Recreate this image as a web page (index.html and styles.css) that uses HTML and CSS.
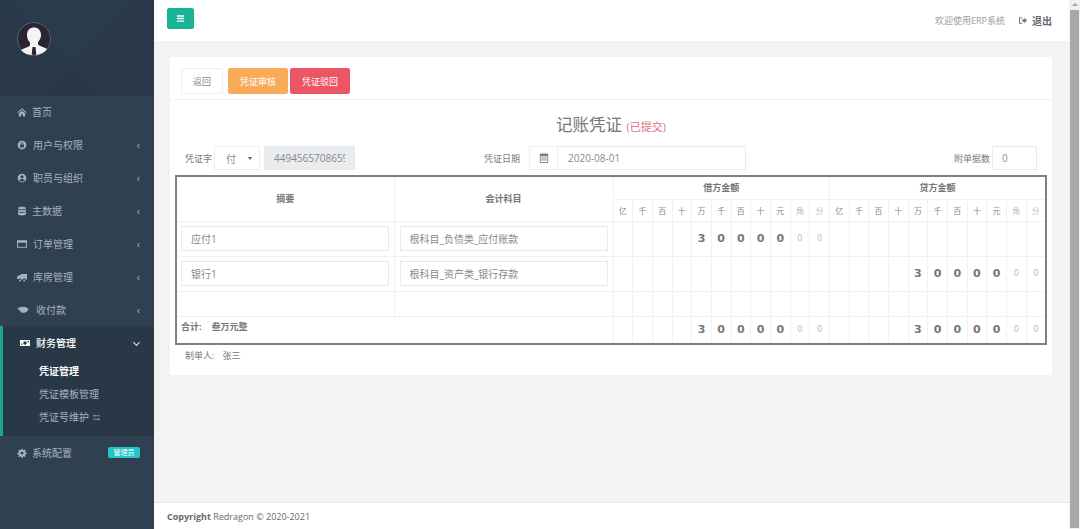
FILE: index.html
```html
<!DOCTYPE html>
<html lang="zh-CN">

<head>
    <meta charset="UTF-8">
    <title>记账凭证</title>
    <link rel="stylesheet" href="styles.css">
</head>

<body>
    <div class="app">
        <nav class="sidebar">
            <div class="profile">
                <svg class="avatar" viewBox="0 0 34 34">
                    <circle cx="17" cy="17" r="16.500" fill="#2a2435" stroke="#56606e" />
                    <path d="M10 13c0-5 3-7.500 7-7.500s7 2.500 7 7.500c0 3-1.500 5.500-3 7v2.500c2 2 6 2.500 9 4.500-3 4-8 6-13 6S7 32 4 28c3-2 7-2.500 9-4.500V20.500c-1.500-1.500-3-4-3-7.500z" fill="#f4f4f4" />
                    <path d="M15.500 25h3l.8 7-2.300 2-2.300-2z" fill="#2a2435" />
                </svg>
            </div>
            <ul class="menu">
                <li class="item">
                    <svg class="icon icon-narrow" viewBox="0 0 16 16"><path d="M8 2l7.500 6.500-1 1L8 4 1.500 9.500l-1-1zM3 10l5-4 5 4v5H9.500v-3.500h-3V15H3z" /></svg>首页
                </li>
                <li class="item">
                    <svg class="icon" viewBox="0 0 16 16"><path fill-rule="evenodd" d="M8 1a7 7 0 110 14A7 7 0 018 1zM5 7v5h6V7h-1V5.500a2 2 0 00-4 0V7zm2-1.500a1 1 0 012 0V7H7z" /></svg>用户与权限<span class="arrow">‹</span>
                </li>
                <li class="item">
                    <svg class="icon" viewBox="0 0 16 16"><path fill-rule="evenodd" d="M8 1a7 7 0 110 14A7 7 0 018 1zm0 2.500a2.500 2.500 0 100 5 2.500 2.500 0 000-5zM3.800 11.500a5 5 0 008.400 0C11 10 9.500 9.500 8 9.500s-3 .5-4.200 2z" /></svg>职员与组织<span class="arrow">‹</span>
                </li>
                <li class="item">
                    <svg class="icon icon-narrow" viewBox="0 0 16 16"><path d="M8 1c3.500 0 6.500 1 6.500 2.200S11.500 5.500 8 5.500 1.500 4.400 1.500 3.200 4.500 1 8 1zM1.500 5c1 1 4 1.700 6.500 1.700S13.500 6 14.500 5v2.500c0 1.200-3 2.200-6.500 2.200s-6.500-1-6.500-2.200zm0 4.300c1 1 4 1.700 6.500 1.700s5.500-.7 6.500-1.700v3.500C14.500 14 11.500 15 8 15s-6.500-1-6.500-2.200z" /></svg>主数据<span class="arrow">‹</span>
                </li>
                <li class="item">
                    <svg class="icon" viewBox="0 0 16 16"><path fill-rule="evenodd" d="M0 2h16v12H0zm1.500 4v6.500h13V6z" /></svg>订单管理<span class="arrow">‹</span>
                </li>
                <li class="item">
                    <svg class="icon" viewBox="0 0 16 16"><path d="M6 3h10v9h-2.500a2 2 0 00-4 0H6.500a2 2 0 00-3.500-1H0V7.500L2.500 5H6zM5 12a1.500 1.500 0 110 3 1.500 1.500 0 010-3zm6.500 0a1.500 1.500 0 110 3 1.500 1.500 0 010-3z" /></svg>库房管理<span class="arrow">‹</span>
                </li>
                <li class="item">
                    <svg class="icon icon-wide" viewBox="0 0 20 16" fill="none" stroke="currentColor" stroke-width="1.500"><path d="M1 6c4-3 13-4 17 0 1 3-3 6-7 6-3 0-5-1-6-3" /><circle cx="12" cy="8" r="2.200" /></svg>收付款<span class="arrow">‹</span>
                </li>
                <li class="active-group">
                    <div class="item active-title">
                        <svg class="icon" viewBox="0 0 20 16"><path fill-rule="evenodd" d="M0 2h20v12H0zm10 2.500a3.500 3.500 0 100 7 3.500 3.500 0 000-7zM2 4v7.500H5a3 3 0 00-3-3zm16 0h-3a3 3 0 003 3z" /></svg>财务管理<span class="arrow-down"></span>
                    </div>
                    <ul class="submenu">
                        <li class="sub-active">凭证管理</li>
                        <li>凭证模板管理</li>
                        <li>凭证号维护 <svg class="icon-small" viewBox="0 0 12 10" fill="none" stroke="currentColor"><path d="M1 2.500h10M3 1v3M1 7.500h10M9 6v3" /></svg></li>
                    </ul>
                </li>
                <li class="item">
                    <svg class="icon icon-narrow" viewBox="0 0 16 16"><path fill-rule="evenodd" d="M7 1h2l.4 2 1.400.6L12.500 2.500 14 4l-1.100 1.700.6 1.300 2 .4v2l-2 .4-.6 1.400 1.100 1.700-1.500 1.500-1.700-1.100-1.400.6-.4 2H7l-.4-2-1.400-.6-1.700 1.100L2 13.500l1.100-1.700-.6-1.400-2-.4v-2l2-.4.6-1.300L2 4l1.500-1.500 1.700 1.100 1.400-.6zM8 6a2.200 2.200 0 100 4.400A2.200 2.200 0 008 6z" /></svg>系统配置<span class="badge">管理员</span>
                </li>
            </ul>
        </nav>

        <div class="main">
            <header class="topbar">
                <button class="toggle"><svg viewBox="0 0 10 9" fill="#fff"><path d="M1 1h8v1.500H1zM1 3.800h8v1.500H1zM1 6.600h8v1.500H1z" /></svg></button>
                <span class="welcome">欢迎使用ERP系统</span>
                <span class="logout">
                    <svg class="logout-icon" viewBox="0 0 12 10"><path d="M5 0H1a1 1 0 00-1 1v8a1 1 0 001 1h4V8.500H1.500v-7H5zM5 3h3V0.500L12 5 8 9.500V7H5z" /></svg>退出
                </span>
            </header>

            <div class="content">
                <div class="card">
                    <div class="toolbar">
                        <button class="btn btn-default">返回</button>
                        <button class="btn btn-warning">凭证审核</button>
                        <button class="btn btn-danger">凭证驳回</button>
                    </div>
                    <h2 class="title">记账凭证 <small>(已提交)</small></h2>

                    <div class="form-row">
                        <label class="label-first">凭证字</label>
                        <div class="select">付<span class="caret"></span></div>
                        <input class="field field-readonly" value="449456570865930" readonly>
                        <label class="label-date">凭证日期</label>
                        <span class="addon">
                            <svg viewBox="0 0 12 12" fill="#777"><path fill-rule="evenodd" d="M2 1h2V0h1v1h2V0h1v1h2a1 1 0 011 1v9a1 1 0 01-1 1H2a1 1 0 01-1-1V2a1 1 0 011-1zm0 3v7h8V4zm1 1h1.500v1.500H3zm2.300 0h1.500v1.500H5.300zM7.600 5H9v1.500H7.600zM3 7.500h1.500V9H3zm2.300 0h1.500V9H5.300zm2.300 0H9V9H7.600z" /></svg>
                        </span>
                        <input class="field field-date" value="2020-08-01">
                        <label class="label-attach">附单据数</label>
                        <input class="field field-attach" value="0">
                    </div>

                    <table class="voucher">
                        <colgroup>
                            <col class="col-summary">
                            <col class="col-subject">
                        </colgroup>
                        <thead>
                            <tr class="head-one">
                                <th rowspan="2">摘要</th>
                                <th rowspan="2">会计科目</th>
                                <th colspan="11">借方金额</th>
                                <th colspan="11">贷方金额</th>
                            </tr>
                            <tr class="head-two">
                                <td>亿</td><td>千</td><td>百</td><td>十</td><td>万</td><td>千</td><td>百</td><td>十</td><td>元</td><td class="faint">角</td><td class="faint">分</td>
                                <td>亿</td><td>千</td><td>百</td><td>十</td><td>万</td><td>千</td><td>百</td><td>十</td><td>元</td><td class="faint">角</td><td class="faint">分</td>
                            </tr>
                        </thead>
                        <tbody>
                            <tr class="row-entry">
                                <td class="cell-input cell-summary"><input class="field" value="应付1"></td>
                                <td class="cell-input"><input class="field" value="根科目_负债类_应付账款"></td>
                                <td></td><td></td><td></td><td></td>
                                <td class="num">3</td><td class="num">0</td><td class="num">0</td><td class="num">0</td><td class="num">0</td><td class="cent">0</td><td class="cent">0</td>
                                <td></td><td></td><td></td><td></td><td></td><td></td><td></td><td></td><td></td><td></td><td></td>
                            </tr>
                            <tr class="row-entry">
                                <td class="cell-input cell-summary"><input class="field" value="银行1"></td>
                                <td class="cell-input"><input class="field" value="根科目_资产类_银行存款"></td>
                                <td></td><td></td><td></td><td></td><td></td><td></td><td></td><td></td><td></td><td></td><td></td>
                                <td></td><td></td><td></td><td></td>
                                <td class="num">3</td><td class="num">0</td><td class="num">0</td><td class="num">0</td><td class="num">0</td><td class="cent">0</td><td class="cent">0</td>
                            </tr>
                            <tr class="row-empty">
                                <td></td><td></td>
                                <td></td><td></td><td></td><td></td><td></td><td></td><td></td><td></td><td></td><td></td><td></td>
                                <td></td><td></td><td></td><td></td><td></td><td></td><td></td><td></td><td></td><td></td><td></td>
                            </tr>
                            <tr class="row-total">
                                <td colspan="2" class="total-text">合计:<span class="total-amount">叁万元整</span></td>
                                <td></td><td></td><td></td><td></td>
                                <td class="num">3</td><td class="num">0</td><td class="num">0</td><td class="num">0</td><td class="num">0</td><td class="cent">0</td><td class="cent">0</td>
                                <td></td><td></td><td></td><td></td>
                                <td class="num">3</td><td class="num">0</td><td class="num">0</td><td class="num">0</td><td class="num">0</td><td class="cent">0</td><td class="cent">0</td>
                            </tr>
                        </tbody>
                    </table>
                    <p class="maker">制单人:<span class="maker-name">张三</span></p>
                </div>
            </div>

            <footer class="footer"><strong>Copyright</strong> Redragon © 2020-2021</footer>
        </div>

        <div class="scrollbar">
            <span class="scroll-up"></span>
            <div class="scroll-thumb"></div>
        </div>
    </div>
</body>

</html>
```

FILE: styles.css
```css
* {
    box-sizing: border-box;
}

body {
    margin: 0;
    font-family: "Open Sans", "Noto Sans CJK SC", sans-serif;
    font-size: 9px;
    color: #777;
    background-color: #f3f3f4;
    overflow: hidden;
}

ul {
    list-style: none;
    margin: 0;
    padding: 0;
}

.app {
    display: flex;
    height: 529px;
}

/* 左侧菜单 */
.sidebar {
    width: 154px;
    flex-shrink: 0;
    background-color: #2f4050;
    color: #a7b1c2;
    font-size: 10px;
}

.profile {
    height: 96px;
    padding: 22px 0 0 17px;
    background-color: #2a3b4b;
    background-image:
        linear-gradient(135deg, transparent 55%, rgba(0, 0, 0, 0.03) 55%),
        linear-gradient(45deg, rgba(0, 0, 0, 0.03) 40%, transparent 40%);
}

.avatar {
    display: block;
    width: 34px;
    height: 34px;
}

.item {
    display: flex;
    align-items: center;
    height: 33px;
    padding: 0 14px 2px 17px;
}

.icon {
    width: 10px;
    height: 10px;
    margin-right: 6px;
    fill: currentColor;
    flex-shrink: 0;
}

.icon-narrow {
    margin-right: 5px;
}

.icon-wide {
    width: 12px;
    margin-right: 7px;
}

.arrow {
    margin-left: auto;
    font-size: 11px;
    line-height: 1;
}

.arrow-down {
    margin-left: auto;
    margin-right: 1px;
    width: 5px;
    height: 5px;
    border-right: 1px solid #dfe4ed;
    border-bottom: 1px solid #dfe4ed;
    transform: rotate(45deg);
}

.active-group {
    height: 110px;
    margin: -1px 0 1px;
    background-color: #293846;
    border-left: 3px solid #19aa8d;
}

.active-title {
    height: 35px;
    color: #fff;
    font-weight: 500;
}

.submenu li {
    height: 23px;
    line-height: 21px;
    padding-left: 36px;
}

.submenu .sub-active {
    color: #fff;
    font-weight: 700;
}

.icon-small {
    width: 9px;
    height: 7px;
}

.badge {
    margin-left: auto;
    width: 32px;
    height: 11px;
    line-height: 11px;
    text-align: center;
    font-size: 7px;
    color: #fff;
    background-color: #23c6c8;
    border-radius: 2px;
}

/* 右侧内容 */
.main {
    flex: 1;
    display: flex;
    flex-direction: column;
    min-width: 0;
}

.topbar {
    display: flex;
    align-items: center;
    height: 41px;
    padding: 0 17px 0 13px;
    background-color: #fff;
}

.toggle {
    width: 27px;
    height: 21px;
    padding: 0;
    margin: -5px 0 0;
    border: 1px solid #1ab394;
    border-radius: 2px;
    background-color: #1ab394;
}

.toggle svg {
    display: block;
    width: 9px;
    height: 9px;
    margin: auto;
}

.welcome {
    margin-left: auto;
    color: #999c9e;
    font-size: 9px;
}

.logout {
    display: flex;
    align-items: center;
    margin-left: 14px;
    font-size: 10px;
    font-weight: 700;
    color: #676a6c;
}

.logout-icon {
    width: 8px;
    height: 7px;
    margin-right: 5px;
    fill: #777;
}

.content {
    flex: 1;
    padding: 16px 17px 0 16px;
}

.card {
    height: 318px;
    background-color: #fff;
}

.toolbar {
    display: flex;
    height: 43px;
    padding: 11px 0 0 11px;
    border-bottom: 1px solid #f0f1f2;
}

.btn {
    height: 26px;
    margin-right: 2px;
    padding: 0;
    border: 1px solid;
    border-radius: 2px;
    font-family: inherit;
    font-size: 9px;
    color: #fff;
}

.btn-default {
    width: 42px;
    margin-right: 5px;
    color: #888;
    background-color: #fff;
    border-color: #eceef0;
}

.btn-warning {
    width: 60px;
    background-color: #f8ac59;
    border-color: #f8ac59;
}

.btn-danger {
    width: 60px;
    background-color: #ed5565;
    border-color: #ed5565;
}

.title {
    height: 46px;
    margin: 0;
    padding-top: 12px;
    text-align: center;
    font-size: 16.500px;
    line-height: 26px;
    font-weight: 400;
    color: #777;
}

.title small {
    font-size: 11px;
    color: #de7080;
}

.form-row {
    display: flex;
    align-items: center;
    height: 24px;
    padding-left: 15px;
    margin-bottom: 5px;
}

.label-first {
    width: 29px;
}

.label-date {
    margin-left: 129px;
    width: 45px;
}

.label-attach {
    margin-left: 208px;
    width: 38px;
}

.field {
    width: 100%;
    height: 25px;
    padding: 0 9px;
    border: 1px solid #e9eaeb;
    font-family: inherit;
    font-size: 10px;
    color: #888;
    background-color: #fff;
    outline: none;
}

.form-row .field {
    height: 24px;
}

.select {
    display: flex;
    align-items: center;
    justify-content: space-between;
    width: 46px;
    height: 24px;
    margin-right: 4px;
    padding: 0 7px 0 11px;
    border: 1px solid #eceef0;
    font-size: 10px;
    color: #888;
}

.caret {
    border-left: 2px solid transparent;
    border-right: 2px solid transparent;
    border-top: 3px solid #555;
}

.form-row .field-readonly {
    width: 91px;
    background-color: #e9ecef;
    border-color: #e9ecef;
}

.addon {
    display: flex;
    align-items: center;
    justify-content: center;
    width: 29px;
    height: 24px;
    border: 1px solid #eceef0;
}

.addon svg {
    width: 10px;
    height: 10px;
}

.form-row .field-date {
    width: 188px;
    padding-left: 10px;
    border-left: 0;
}

.form-row .field-attach {
    width: 45px;
}

/* 凭证表格 */
.voucher {
    width: 872px;
    margin-left: 5px;
    table-layout: fixed;
    border-collapse: collapse;
    border: 2px solid #808080;
}

.voucher td,
.voucher th {
    padding: 0;
    border: 1px solid #f0f1f2;
    text-align: center;
}

.col-summary {
    width: 218px;
}

.col-subject {
    width: 219px;
}

.voucher th {
    font-size: 9px;
    font-weight: 700;
    color: #777;
}

.head-one {
    height: 23px;
}

.head-two {
    height: 22px;
}

.head-two td {
    font-size: 8px;
    color: #888;
}

.head-two .faint {
    color: #bbb;
}

.row-entry {
    height: 35px;
}

.row-empty {
    height: 25px;
}

.row-total {
    height: 28px;
}

.voucher .cell-input {
    padding: 0 5px;
}

.voucher .cell-summary {
    padding: 0 5px 0 4px;
}

.voucher .num {
    font-family: "DejaVu Sans", sans-serif;
    font-size: 11px;
    font-weight: 700;
    color: #777;
}

.voucher .cent {
    font-family: "DejaVu Sans", sans-serif;
    font-size: 8px;
    color: #bbb;
}

.voucher .total-text {
    padding: 0 0 6px 4px;
    text-align: left;
    font-weight: 700;
    color: #777;
}

.total-amount {
    margin-left: 10px;
}

.maker {
    margin: 5px 0 0 15px;
    line-height: 12px;
}

.maker-name {
    margin-left: 8px;
}

.footer {
    height: 27px;
    line-height: 27px;
    padding-left: 13px;
    background-color: #fff;
    border-top: 1px solid #e7eaec;
    font-size: 9px;
    color: #676a6c;
}

/* 滚动条 */
.scrollbar {
    width: 11px;
    flex-shrink: 0;
    padding: 3px 1px 0;
    background-color: #f1f1f1;
}

.scroll-up {
    display: block;
    width: 0;
    margin: 0 auto 4px;
    border-left: 3px solid transparent;
    border-right: 3px solid transparent;
    border-bottom: 3px solid #a3a3a3;
}

.scroll-thumb {
    height: 518px;
    background-color: #a8a8a8;
}
```
